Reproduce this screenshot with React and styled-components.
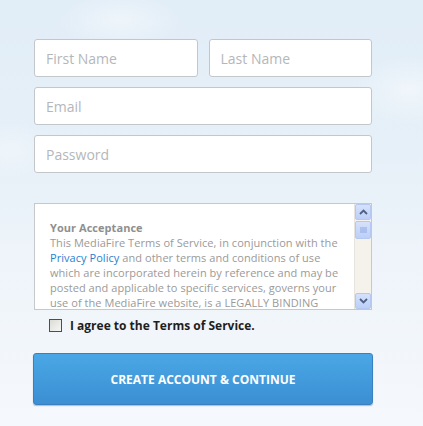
import React from "react";
import styled, { createGlobalStyle } from "styled-components";

const Global = createGlobalStyle`
  html, body { margin: 0; padding: 0; }
  body {
    width: 423px;
    height: 426px;
    overflow: hidden;
    font-family: "Open Sans", "Liberation Sans", sans-serif;
    background:
      radial-gradient(ellipse 90px 40px at 120px 20px, rgba(255,255,255,0.45), rgba(255,255,255,0) 70%),
      radial-gradient(ellipse 80px 50px at 410px 90px, rgba(255,255,255,0.45), rgba(255,255,255,0) 70%),
      radial-gradient(ellipse 70px 40px at 10px 150px, rgba(255,255,255,0.35), rgba(255,255,255,0) 70%),
      linear-gradient(180deg, #e1edf7 0%, #e6f0f8 35%, #eef4fa 60%, #f5f8fc 100%);
  }
`;

const Page = styled.div`
  padding: 39px 0 0 34px;
  width: 338px;
  display: flex;
  flex-direction: column;
`;

const Row = styled.div`
  display: flex;
  gap: 11px;
  margin-bottom: 10px;
`;

const Input = styled.input`
  box-sizing: border-box;
  flex: 1;
  min-width: 0;
  height: 38px;
  border: 1px solid #c4c7ca;
  border-radius: 3px;
  background: #fff;
  padding: 0 11px;
  font-family: "Open Sans", "Liberation Sans", sans-serif;
  font-size: 14px;
  color: #333;
  outline: none;
  &::placeholder { color: #b4b7ba; }
`;

const Terms = styled.div`
  margin-top: 20px;
  box-sizing: border-box;
  height: 107px;
  border: 1px solid #c6c8ca;
  background: #fff;
  display: flex;
`;

const TermsText = styled.div`
  flex: 1;
  overflow: hidden;
  padding: 16px 8px 0 15px;
  font-size: 11px;
  line-height: 15px;
  letter-spacing: 0.05px;
  color: #9a9a9a;
`;

const Heading = styled.div`
  font-weight: 700;
  color: #8f8f8f;
`;

const Link = styled.a`
  color: #2a7fd0;
  text-decoration: none;
`;

const Scrollbar = styled.div`
  width: 16px;
  display: flex;
  flex-direction: column;
  background: #f4f2ea;
  border-left: 1px solid #e6e4dc;
`;

const ScrollButton = styled.div`
  height: 16px;
  box-sizing: border-box;
  border: 1px solid #b4c8f2;
  border-radius: 2px;
  background: linear-gradient(180deg, #d6e2fc 0%, #bccff8 100%);
  display: flex;
  align-items: center;
  justify-content: center;
`;

const Thumb = styled(ScrollButton)`
  height: 18px;
  margin-top: 1px;
`;

const Track = styled.div`
  flex: 1;
`;

const AgreeRow = styled.label`
  display: flex;
  align-items: center;
  gap: 8px;
  padding: 7px 0 0 15px;
  font-size: 12px;
  font-weight: 700;
  color: #1e1e1e;
`;

const Box = styled.span`
  width: 13px;
  height: 13px;
  box-sizing: border-box;
  border: 1px solid #1d5a8f;
  background: linear-gradient(135deg, #dcdcd6 0%, #f6f6f4 100%);
`;

const Button = styled.button`
  margin-top: 19px;
  margin-left: -1px;
  width: 340px;
  height: 52px;
  border: 1px solid #3a7fc0;
  border-radius: 3px;
  background: linear-gradient(180deg, #4aa7e6 0%, #3b8fd2 100%);
  box-shadow: 0 1px 1px rgba(40, 80, 120, 0.35);
  color: #fff;
  font-family: "Open Sans", "Liberation Sans", sans-serif;
  font-size: 12px;
  font-weight: 700;
  letter-spacing: 0;
  text-transform: uppercase;
`;

const Chevron = ({ up }) => (
  <svg width="9" height="6" viewBox="0 0 9 6">
    <path
      d={up ? "M1 5 L4.5 1.5 L8 5" : "M1 1 L4.5 4.5 L8 1"}
      fill="none"
      stroke="#4d6185"
      strokeWidth="1.8"
    />
  </svg>
);

const Grip = () => (
  <svg width="7" height="7" viewBox="0 0 7 7">
    <path d="M0 1h7M0 3h7M0 5h7" stroke="#8ea7e0" strokeWidth="1" />
  </svg>
);

export default function App() {
  return (
    <>
      <Global />
      <Page>
        <Row>
          <Input placeholder="First Name" />
          <Input placeholder="Last Name" />
        </Row>
        <Row>
          <Input placeholder="Email" />
        </Row>
        <Row>
          <Input type="password" placeholder="Password" />
        </Row>
        <Terms>
          <TermsText>
            <Heading>Your Acceptance</Heading>
            This MediaFire Terms of Service, in conjunction with the{" "}
            <Link href="#">Privacy Policy</Link> and other terms and conditions of use
            which are incorporated herein by reference and may be posted and
            applicable to specific services, governs your use of the MediaFire
            website, is a LEGALLY BINDING agreement between you and MediaFire.
          </TermsText>
          <Scrollbar>
            <ScrollButton><Chevron up /></ScrollButton>
            <Thumb><Grip /></Thumb>
            <Track />
            <ScrollButton><Chevron /></ScrollButton>
          </Scrollbar>
        </Terms>
        <AgreeRow>
          <Box />
          I agree to the Terms of Service.
        </AgreeRow>
        <Button>Create Account &amp; Continue</Button>
      </Page>
    </>
  );
}
